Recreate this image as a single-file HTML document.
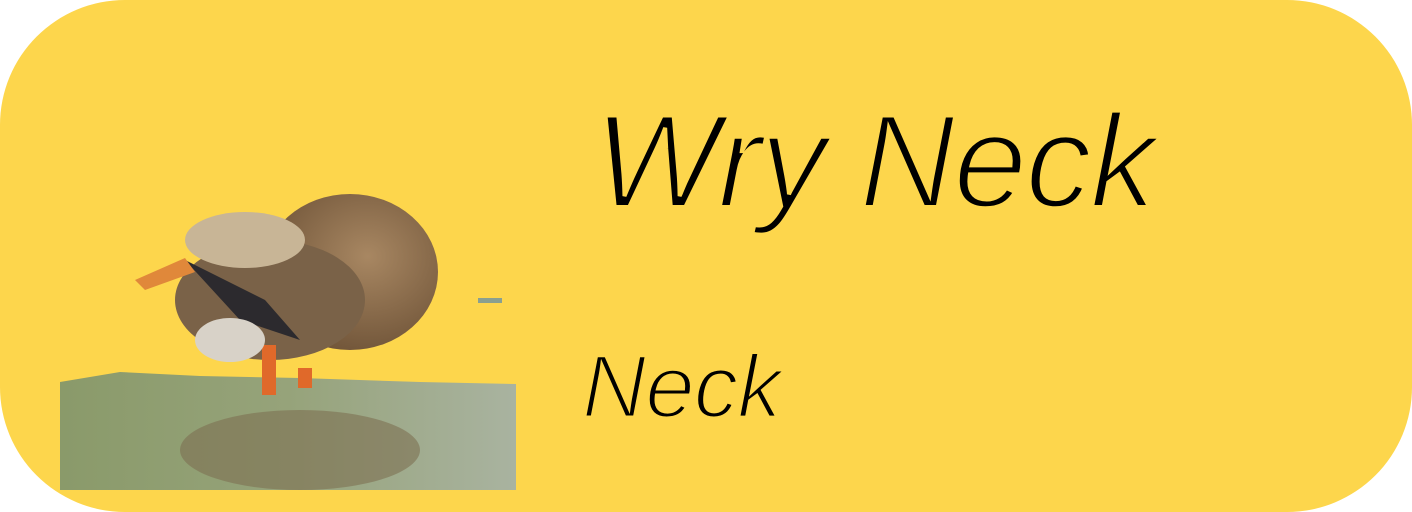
<!DOCTYPE html>
<html><head><meta charset="utf-8"><style>
html,body{margin:0;padding:0;background:#fff;width:1412px;height:512px;overflow:hidden}
.card{position:absolute;left:0;top:0;width:1412px;height:512px;background:#FDD64C;border-radius:125px;}
.t1{position:absolute;left:594px;top:86px;font-family:"Liberation Sans",sans-serif;font-style:italic;font-size:133px;color:#000;letter-spacing:-2px;white-space:nowrap;-webkit-text-stroke:4px #FDD64C}
.t2{position:absolute;left:582px;top:335px;font-family:"Liberation Sans",sans-serif;font-style:italic;font-size:89px;color:#000;letter-spacing:-1px;white-space:nowrap;-webkit-text-stroke:3px #FDD64C}
svg{position:absolute;left:0;top:0}
</style></head><body>
<div class="card"></div>
<svg width="1412" height="512">
  <defs>
    <linearGradient id="w" x1="0" y1="0" x2="1" y2="0">
      <stop offset="0" stop-color="#8a9a6a"/><stop offset="0.5" stop-color="#96a37a"/><stop offset="1" stop-color="#a9b3a0"/>
    </linearGradient>
    <radialGradient id="b" cx="0.6" cy="0.4" r="0.7">
      <stop offset="0" stop-color="#a88762"/><stop offset="1" stop-color="#6b5035"/>
    </radialGradient>
  </defs>
  <path d="M60 382 L120 372 L200 376 L300 378 L420 382 L516 384 L516 490 L60 490 Z" fill="url(#w)"/>
  <ellipse cx="300" cy="450" rx="120" ry="40" fill="#7d6f52" opacity="0.6"/>
  <ellipse cx="350" cy="272" rx="88" ry="78" fill="url(#b)"/>
  <ellipse cx="270" cy="300" rx="95" ry="60" fill="#7a6248"/>
  <ellipse cx="245" cy="240" rx="60" ry="28" fill="#c8b596"/>
  <path d="M185 260 L265 300 L300 340 L240 320 Z" fill="#2c2a2e"/>
  <path d="M135 280 L185 258 L195 272 L145 290 Z" fill="#e0883a"/>
  <rect x="262" y="345" width="14" height="50" fill="#e0692a"/>
  <rect x="298" y="368" width="14" height="20" fill="#e0692a"/>
  <ellipse cx="230" cy="340" rx="35" ry="22" fill="#d8d2c8"/>
  <rect x="478" y="298" width="24" height="5" fill="#8aa090"/>
</svg>
<div class="t1">Wry Neck</div>
<div class="t2">Neck</div>
</body></html>
